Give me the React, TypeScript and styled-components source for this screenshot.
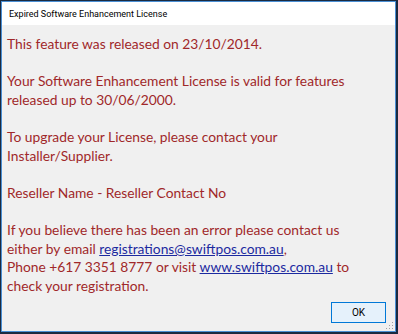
import React from "react";
import styled, { createGlobalStyle } from "styled-components";

const Global = createGlobalStyle`
  html, body { margin: 0; padding: 0; background: #f0f0f0; overflow: hidden; }
  #root { width: 398px; height: 334px; }
`;

const Window = styled.div`
  box-sizing: border-box;
  width: 398px;
  height: 334px;
  border-style: solid;
  border-color: #1b2a40;
  border-width: 1px 2px 2px 1px;
  display: flex;
  overflow: hidden;
`;

const Frame = styled.div`
  flex: 1;
  display: flex;
  flex-direction: column;
  border: 1px solid #4a8fd4;
  background: #f0f0f0;
  position: relative;
  min-height: 0;
`;

const TitleBar = styled.div`
  height: 23px;
  flex: none;
  background: #ffffff;
  display: flex;
  align-items: center;
  padding-left: 7px;
  font-family: Roboto, sans-serif;
  font-size: 9px;
  color: #000;
`;

const Body = styled.div`
  flex: 1;
  display: flex;
  flex-direction: column;
  padding: 10px 4px 0 5px;
  min-height: 0;
`;

const Message = styled.div`
  font-family: Lato, sans-serif;
  font-size: 13.8px;
  line-height: 18.6px;
  color: #a0282a;
`;

const Para = styled.p`
  margin: 0 0 18.6px 0;
  &:last-child { margin-bottom: 0; }
`;

const Line = styled.span`
  display: block;
  white-space: nowrap;
`;

const Link = styled.a`
  color: #1c2aa0;
  text-decoration: underline;
`;

const Footer = styled.div`
  margin-top: auto;
  display: flex;
  justify-content: flex-end;
  padding: 0 9px 8px 0;
  flex: none;
`;

const Button = styled.button`
  width: 55px;
  height: 21px;
  box-sizing: border-box;
  background: #e5f1fb;
  border: 1px solid #0078d7;
  font-family: Roboto, sans-serif;
  font-size: 10px;
  color: #000;
  padding: 0;
`;

const Grip = styled.svg`
  position: absolute;
  right: 1px;
  bottom: 1px;
`;

export default function App() {
  return (
    <>
      <Global />
      <Window>
        <Frame>
          <TitleBar>Expired Software Enhancement License</TitleBar>
          <Body>
            <Message>
              <Para>
                <Line>This feature was released on 23/10/2014.</Line>
              </Para>
              <Para>
                <Line>Your Software Enhancement License is valid for features</Line>
                <Line>released up to 30/06/2000.</Line>
              </Para>
              <Para>
                <Line>To upgrade your License, please contact your</Line>
                <Line>Installer/Supplier.</Line>
              </Para>
              <Para>
                <Line>Reseller Name - Reseller Contact No</Line>
              </Para>
              <Para>
                <Line>If you believe there has been an error please contact us</Line>
                <Line>
                  either by email <Link href="#">registrations@swiftpos.com.au</Link>,
                </Line>
                <Line>
                  Phone +617 3351 8777 or visit <Link href="#">www.swiftpos.com.au</Link> to
                </Line>
                <Line>check your registration.</Line>
              </Para>
            </Message>
          </Body>
          <Footer>
            <Button>OK</Button>
          </Footer>
          <Grip width="10" height="10" viewBox="0 0 10 10">
            {[
              [8, 2], [8, 5], [5, 5], [8, 8], [5, 8], [2, 8],
            ].map(([x, y], i) => (
              <rect key={i} x={x} y={y} width="1" height="1" fill="#a0a0a0" />
            ))}
          </Grip>
        </Frame>
      </Window>
    </>
  );
}
